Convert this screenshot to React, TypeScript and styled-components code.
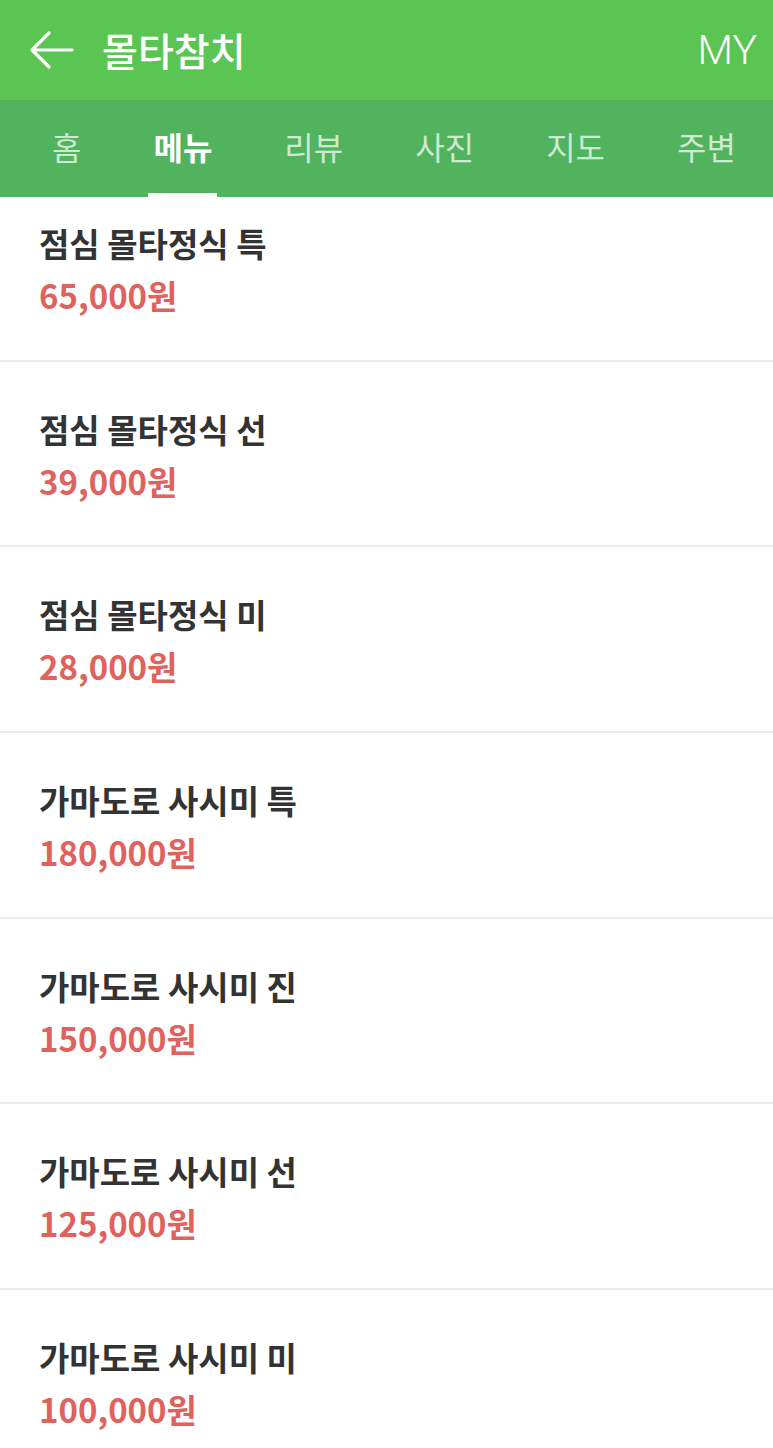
import React from 'react'
import styled, { createGlobalStyle } from 'styled-components'

const GlobalStyle = createGlobalStyle`
	html, body {
		margin: 0;
		padding: 0;
		background: #ffffff;
	}
	body {
		font-family: 'Noto Sans CJK KR', 'Noto Sans', sans-serif;
		-webkit-font-smoothing: antialiased;
	}
`

const menu = [
	{ name: '점심 몰타정식 특', price: '65,000원' },
	{ name: '점심 몰타정식 선', price: '39,000원' },
	{ name: '점심 몰타정식 미', price: '28,000원' },
	{ name: '가마도로 사시미 특', price: '180,000원' },
	{ name: '가마도로 사시미 진', price: '150,000원' },
	{ name: '가마도로 사시미 선', price: '125,000원' },
	{ name: '가마도로 사시미 미', price: '100,000원' }
]

const tabs = ['홈', '메뉴', '리뷰', '사진', '지도', '주변']

export default function App() {
	return (
		<>
			<GlobalStyle />
			<Page>
				<TopBar>
					<BackButton aria-label="뒤로">
						<svg width="46" height="40" viewBox="0 0 46 40" fill="none">
							<path
								d="M44 20H4M21 3L4 20l17 17"
								stroke="#fff"
								strokeWidth="3.2"
								strokeLinecap="round"
								strokeLinejoin="round"
							/>
						</svg>
					</BackButton>
					<Title>몰타참치</Title>
					<MyLink>MY</MyLink>
				</TopBar>
				<TabBar>
					{tabs.map(tab => (
						<Tab key={tab} active={tab === '메뉴'}>
							{tab}
						</Tab>
					))}
				</TabBar>
				<Scroller>
					<MenuList>
						{menu.map(item => (
							<MenuItem key={item.name}>
								<ItemName>{item.name}</ItemName>
								<ItemPrice>{item.price}</ItemPrice>
							</MenuItem>
						))}
					</MenuList>
				</Scroller>
			</Page>
		</>
	)
}

const Page = styled.div`
	width: 773px;
	height: 1448px;
	overflow: hidden;
	display: flex;
	flex-direction: column;
	background: #fff;
`

const TopBar = styled.header`
	height: 100px;
	flex: none;
	background: #5bc554;
	display: flex;
	align-items: center;
	padding: 0 16px 0 28px;
	box-sizing: border-box;
`

const BackButton = styled.button`
	border: 0;
	background: none;
	padding: 0;
	width: 46px;
	height: 40px;
	display: flex;
	margin-right: 28px;
	cursor: pointer;
`

const Title = styled.h1`
	margin: 0 0 2px;
	flex: 1;
	color: #fff;
	font-size: 39px;
	font-weight: 500;
`

const MyLink = styled.span`
	color: #fff;
	font-family: Roboto, 'Liberation Sans', sans-serif;
	font-size: 41px;
	font-weight: 300;
`

const TabBar = styled.nav`
	height: 97px;
	flex: none;
	background: #52b35f;
	display: flex;
	align-items: stretch;
	padding-left: 17px;
	box-sizing: border-box;
`

const Tab = styled.div<{ active?: boolean }>`
	margin: 0 31px;
	padding: 0 5px 5px;
	display: flex;
	align-items: center;
	font-size: 32px;
	font-weight: ${p => (p.active ? 700 : 400)};
	color: ${p => (p.active ? '#fff' : 'rgba(255,255,255,0.72)')};
	border-bottom: 4px solid ${p => (p.active ? '#fff' : 'transparent')};
	border-top: 4px solid transparent;
	&:first-child {
		margin-left: 30px;
	}
`

const Scroller = styled.div`
	flex: 1;
	overflow: hidden;
`

const MenuList = styled.ul`
	list-style: none;
	margin: -21px 0 0;
	padding: 0;
`

const MenuItem = styled.li`
	height: 185.7px;
	box-sizing: border-box;
	border-bottom: 2px solid #ececec;
	padding: 45px 39px 0;
	display: flex;
	flex-direction: column;
`

const ItemName = styled.div`
	font-size: 33px;
	font-weight: 700;
	color: #333;
	line-height: 44px;
`

const ItemPrice = styled.div`
	margin-top: 8px;
	font-size: 33px;
	font-weight: 700;
	color: #e0625d;
	line-height: 44px;
`
